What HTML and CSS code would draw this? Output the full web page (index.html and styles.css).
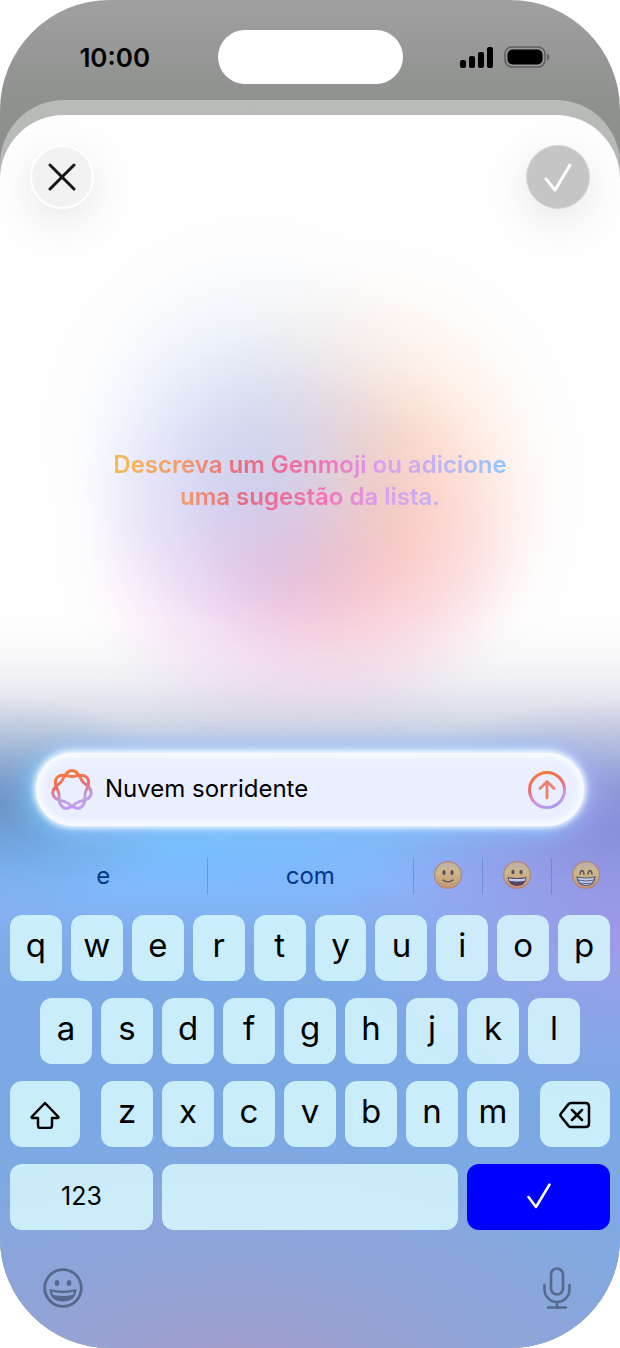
FILE: index.html
```html
<!DOCTYPE html>
<html lang="pt-BR">
<head>
  <meta charset="UTF-8" />
  <meta name="viewport" content="width=device-width, initial-scale=1.0"/>
  <title>Genmoji</title>
  <link rel="stylesheet" href="styles.css">
</head>
<body>

  <div class="phone">

    <header class="status-bar">
      <div class="time">10:00</div>
      <div class="island"></div>
      <div class="status-icons">
        <svg width="33" height="21" viewBox="0 0 33 21">
          <rect x="0" y="13" width="6" height="8" rx="2"/>
          <rect x="9" y="9" width="6" height="12" rx="2"/>
          <rect x="18" y="5" width="6" height="16" rx="2"/>
          <rect x="27" y="0" width="6" height="21" rx="2"/>
        </svg>
        <svg width="46" height="22" viewBox="0 0 46 22">
          <rect x="1" y="1" width="40" height="20" rx="7" fill="none" stroke="#5f605f" stroke-width="1.600"/>
          <rect x="3.500" y="3.500" width="35" height="15" rx="5"/>
          <path d="M43 7.500q2.500 1 2.500 3.500t-2.500 3.500z" fill="#5f605f"/>
        </svg>
      </div>
    </header>

    <div class="sheet-back">
      <main class="sheet">

        <div class="toolbar">
          <button class="round-btn" aria-label="Fechar">
            <svg width="28" height="28" viewBox="0 0 28 28"><path d="M2 2l24 24M26 2L2 26"/></svg>
          </button>
          <button class="round-btn done" aria-label="OK">
            <svg width="28" height="30" viewBox="0 0 28 30"><path d="M2 17l9 11L26 3"/></svg>
          </button>
        </div>

        <section class="canvas">
          <div class="orb"></div>
          <h1>Descreva um Genmoji ou adicione<br>uma sugestão da lista.</h1>
        </section>

        <form class="prompt" onsubmit="return false">
          <label for="description" aria-label="Descrição">
            <svg width="42" height="44" viewBox="-21 -22 42 44">
              <defs>
                <linearGradient id="knotFill" x1="0.400" y1="0" x2="0.600" y2="1">
                  <stop offset="0.100" stop-color="#f37a3c"/>
                  <stop offset="0.400" stop-color="#ee6a68"/>
                  <stop offset="0.650" stop-color="#bf9bdc"/>
                  <stop offset="1" stop-color="#c49bfa"/>
                </linearGradient>
                <mask id="knot" maskUnits="userSpaceOnUse" x="-24" y="-24" width="48" height="48">
                  <g fill="none" stroke="#fff" stroke-width="2.900">
                    <path d="M-10.600 -8.450C-7.800 -12-6.500 -19.500 0 -19.500S7.800 -12 10.600 -8.450" id="lobe"/>
                    <use href="#lobe" transform="rotate(51.430)"/>
                    <use href="#lobe" transform="rotate(102.860)"/>
                    <use href="#lobe" transform="rotate(154.290)"/>
                    <use href="#lobe" transform="rotate(205.710)"/>
                    <use href="#lobe" transform="rotate(257.140)"/>
                    <use href="#lobe" transform="rotate(308.570)"/>
                  </g>
                </mask>
              </defs>
              <rect x="-21" y="-22" width="42" height="44" fill="url(#knotFill)" mask="url(#knot)"/>
            </svg>
          </label>
          <input id="description" type="text" value="Nuvem sorridente">
          <button class="send" aria-label="Enviar">
            <svg width="38" height="38" viewBox="0 0 38 38">
              <defs>
                <linearGradient id="ringFill" x1="0.300" y1="0" x2="0.600" y2="1">
                  <stop offset="0" stop-color="#f37a3c"/>
                  <stop offset="0.400" stop-color="#ee6a68"/>
                  <stop offset="0.750" stop-color="#cf96e4"/>
                  <stop offset="1" stop-color="#b09bf0"/>
                </linearGradient>
              </defs>
              <circle cx="19" cy="19" r="17.500" fill="none" stroke="url(#ringFill)" stroke-width="3"/>
              <path d="M19 27V11M12 17.500l7-7 7 7" fill="none" stroke="#e8836f" stroke-width="2.800" stroke-linecap="round" stroke-linejoin="round"/>
            </svg>
          </button>
        </form>

        <div class="suggestions">
          <button>e</button>
          <button>com</button>
          <button aria-label="Sorriso leve">
            <svg width="28" height="28" viewBox="0 0 28 28">
              <defs>
                <linearGradient id="face" x1="0" y1="0" x2="0" y2="1">
                  <stop offset="0" stop-color="#bdb0a8"/>
                  <stop offset="0.400" stop-color="#ccb98a"/>
                  <stop offset="1" stop-color="#c2936f"/>
                </linearGradient>
              </defs>
              <circle cx="14" cy="14" r="13.400" fill="url(#face)" stroke="#b58382" stroke-width="1.200"/>
              <ellipse cx="10" cy="11.500" rx="1.700" ry="2.500" fill="#5b4f62"/>
              <ellipse cx="18" cy="11.500" rx="1.700" ry="2.500" fill="#5b4f62"/>
              <path d="M9 19q5 3.500 10 0" fill="none" stroke="#5b4f62" stroke-width="1.200" stroke-linecap="round"/>
            </svg>
          </button>
          <button aria-label="Sorriso aberto">
            <svg width="28" height="28" viewBox="0 0 28 28">
              <circle cx="14" cy="14" r="13.400" fill="url(#face)" stroke="#b58382" stroke-width="1.200"/>
              <ellipse cx="10" cy="11" rx="1.700" ry="2.300" fill="#5b4f62"/>
              <ellipse cx="18" cy="11" rx="1.700" ry="2.300" fill="#5b4f62"/>
              <path d="M4.500 16q9.500 2 19 0-1 9-9.500 9t-9.500-9z" fill="#55465f"/>
              <path d="M5.500 17.200q8.500 1.800 17 0l-.8 2.600q-7.700 1.600-15.400 0z" fill="#c5d0f5"/>
            </svg>
          </button>
          <button aria-label="Sorriso radiante">
            <svg width="28" height="28" viewBox="0 0 28 28">
              <circle cx="14" cy="14" r="13.400" fill="url(#face)" stroke="#b58382" stroke-width="1.200"/>
              <path d="M8 13q.5-3.500 2-3.500t2 3.500M16 13q.5-3.500 2-3.500t2 3.500" fill="none" stroke="#5b4f62" stroke-width="1.500" stroke-linecap="round"/>
              <path d="M5 16q9 2 18 0-1 8.500-9 8.500T5 16z" fill="#c5d0f5" stroke="#55577d" stroke-width="1.200"/>
              <path d="M5.800 19q8.200 2 16.400 0M8.500 22q5.500 1.300 11 0" fill="none" stroke="#55577d"/>
            </svg>
          </button>
        </div>

        <div class="keyboard">
          <div class="row">
            <button>q</button><button>w</button><button>e</button><button>r</button><button>t</button>
            <button>y</button><button>u</button><button>i</button><button>o</button><button>p</button>
          </div>
          <div class="row row-middle">
            <button>a</button><button>s</button><button>d</button><button>f</button><button>g</button>
            <button>h</button><button>j</button><button>k</button><button>l</button>
          </div>
          <div class="row row-shift">
            <button class="key-side" aria-label="Maiúsculas">
              <svg width="30" height="28" viewBox="0 0 30 28"><path d="M15 2L28 15.500Q29 17 27.500 17H22v7.500Q22 27 19.500 27h-9Q8 27 8 24.500V17H2.500Q1 17 2 15.500z"/></svg>
            </button>
            <div class="letters">
              <button>z</button><button>x</button><button>c</button><button>v</button>
              <button>b</button><button>n</button><button>m</button>
            </div>
            <button class="key-side" aria-label="Apagar">
              <svg width="32" height="28" viewBox="0 0 32 28"><path d="M12 2h14.500Q30 2 30 5.500v17Q30 26 26.500 26H12q-1.500 0-2.500-1.100L2 15.500Q.8 14 2 12.500L9.500 3.100Q10.500 2 12 2zM13 9l10 10M23 9L13 19"/></svg>
            </button>
          </div>
          <div class="row row-space">
            <button class="key-123">123</button>
            <button class="key-blank" aria-label="Espaço"></button>
            <button class="key-ok" aria-label="Confirmar">
              <svg width="24" height="26" viewBox="0 0 24 26"><path d="M1.500 14L9 24 22.500 1.500"/></svg>
            </button>
          </div>
        </div>

        <footer class="bottom-bar">
          <button aria-label="Emoji">
            <svg width="40" height="42" viewBox="0 0 40 42">
              <circle cx="20" cy="21" r="18.300" fill="none" stroke="#56698a" stroke-width="2.800"/>
              <ellipse cx="14" cy="16" rx="2.300" ry="2.900" fill="#56698a"/>
              <ellipse cx="26" cy="16" rx="2.300" ry="2.900" fill="#56698a"/>
              <path d="M6.500 22q13.500 3.500 27 0Q33 34.500 20 34.500T6.500 22z" fill="#56698a"/>
              <path d="M9 24.700q11 2.600 22 0l-1 3q-10 2.800-20 0z" fill="#8fa6d6"/>
            </svg>
          </button>
          <button aria-label="Ditado">
            <svg width="28" height="42" viewBox="0 0 28 42">
              <g fill="none" stroke="#56698a" stroke-width="2.600" stroke-linecap="round">
                <rect x="8" y="1.500" width="12" height="26" rx="6"/>
                <path d="M1.500 18v4.500a12.500 12.500 0 0 0 25 0V18M14 35v6M5 40.500h18"/>
              </g>
            </svg>
          </button>
        </footer>

      </main>
    </div>
  </div>

</body>
</html>
```

FILE: styles.css
```css
:root {
  --ink: #000;
  --key: rgba(218, 251, 255, 0.82);
}

* {
  box-sizing: border-box;
}

body {
  margin: 0;
  background-color: #fff;
  font-family: Inter, 'Liberation Sans', sans-serif;
  color: var(--ink);
}

button {
  display: flex;
  align-items: center;
  justify-content: center;
  margin: 0;
  padding: 0;
  border: none;
  background: none;
  font-family: inherit;
  color: inherit;
  cursor: pointer;
}

svg {
  display: block;
}

.phone {
  display: flex;
  flex-direction: column;
  min-height: 100vh;
  border-radius: 110px;
  overflow: hidden;
  background: linear-gradient(#a0a0a0, #8e918e 100px, #8b8f8b 200px);
}

/* status bar */
.status-bar {
  display: grid;
  grid-template-columns: 1fr 185px 1fr;
  align-items: center;
  padding: 30px 0 16px;
}

.time {
  padding-left: 12px;
  text-align: center;
  font-size: 26px;
  font-weight: 600;
}

.island {
  height: 54px;
  border-radius: 27px;
  background-color: #fff;
}

.status-icons {
  display: flex;
  align-items: center;
  justify-content: center;
  gap: 11px;
  padding-right: 12px;
}

/* sheets */
.sheet-back {
  display: flex;
  flex: 1;
  padding-top: 15px;
  border-radius: 64px 64px 0 0;
  background: linear-gradient(#b9bbb9, #b4b7b4 100px);
}

.sheet {
  display: flex;
  flex: 1;
  flex-direction: column;
  min-width: 0;
  border-radius: 64px 64px 0 0;
  background:
    radial-gradient(75% 20% at 38% 103%, rgba(168, 155, 200, 0.9), rgba(168, 155, 200, 0.35) 55%, rgba(168, 155, 200, 0)),
    radial-gradient(30% 9% at 0% 56%, rgba(100, 140, 190, 0.75), rgba(100, 140, 190, 0.25) 55%, rgba(100, 140, 190, 0)),
    radial-gradient(50% 7% at 30% 59%, rgba(110, 195, 255, 0.75), rgba(110, 195, 255, 0.35) 55%, rgba(110, 195, 255, 0)),
    radial-gradient(45% 11% at 104% 58%, rgba(140, 135, 212, 0.85), rgba(140, 135, 212, 0.3) 55%, rgba(140, 135, 212, 0)),
    radial-gradient(50% 14% at 104% 66%, rgba(165, 155, 235, 0.95), rgba(165, 155, 235, 0.4) 50%, rgba(165, 155, 235, 0)),
    linear-gradient(rgba(255, 255, 255, 0) 41%, #f7f7f9 44%, #eeeff4 46%, #e0e2eb 48%, #cdd5e4 50%, #b4c5e0 52%, #96b1dc 54.5%, #84b2f2 58%, #8bb5fb 62%, #7eace9 67%, #7aa9e6 72%, #7ca9e4 82%, #84a9e0 100%),
    #fefefe;
}

.toolbar {
  display: flex;
  justify-content: space-between;
  padding: 30px 30px 0;
}

.round-btn {
  width: 64px;
  height: 64px;
  border: 2px solid #fff;
  border-radius: 50%;
  background-color: #f2f2f2;
  box-shadow: 0 12px 44px rgba(0, 0, 0, 0.1);
}

.round-btn svg {
  fill: none;
  stroke: #161616;
  stroke-width: 3;
  stroke-linecap: round;
  stroke-linejoin: round;
}

.round-btn.done {
  border: 1px solid #d6d6d6;
  background-color: #c5c5c5;
}

.round-btn.done svg {
  stroke: #fff;
}

/* description area */
.canvas {
  position: relative;
  display: flex;
  flex: 1;
  align-items: center;
  justify-content: center;
}

.orb {
  position: absolute;
  inset: 30px 60px 30px;
  background:
    radial-gradient(38% 40% at 39% 40%, rgba(200, 218, 240, 0.65), rgba(200, 218, 240, 0.25) 55%, rgba(200, 218, 240, 0)),
    radial-gradient(34% 34% at 38% 51%, rgba(190, 192, 252, 0.6), rgba(190, 192, 252, 0.25) 50%, rgba(190, 192, 252, 0)),
    radial-gradient(38% 42% at 62% 47%, rgba(255, 205, 168, 0.7), rgba(255, 205, 168, 0.28) 50%, rgba(255, 205, 168, 0)),
    radial-gradient(38% 36% at 61% 60%, rgba(255, 178, 178, 0.6), rgba(255, 178, 178, 0.25) 50%, rgba(255, 178, 178, 0)),
    radial-gradient(44% 40% at 48% 65%, rgba(226, 155, 218, 0.75), rgba(226, 155, 218, 0.3) 50%, rgba(226, 155, 218, 0));
  filter: blur(16px);
}

.canvas h1 {
  position: relative;
  margin: 0;
  text-align: center;
  font-size: 24px;
  font-weight: 600;
  line-height: 32px;
  color: transparent;
  background: linear-gradient(90deg, #f8bd50, #f19a6c 18%, #ea6c7c 32%, #ee6c98 42%, #f272b4 53%, #dc9eee 68%, #c3b2f2 82%, #8fc8fa);
  background-clip: text;
  -webkit-background-clip: text;
}

/* prompt */
.prompt {
  position: relative;
  display: flex;
  align-items: center;
  gap: 12px;
  height: 73px;
  margin: 0 36px;
  padding: 0 18px 0 15px;
  border-radius: 37px;
  background-color: #e9efff;
  box-shadow:
    inset 0 0 8px 3px #fff,
    0 0 6px 1px #fff,
    0 -2px 12px rgba(225, 245, 255, 0.9),
    -8px 2px 24px rgba(110, 205, 255, 0.7),
    8px -2px 24px rgba(175, 165, 255, 0.7),
    0 0 44px rgba(160, 205, 255, 0.6);
}

.prompt input {
  flex: 1;
  min-width: 0;
  padding: 0 0 2px;
  border: none;
  outline: none;
  background: none;
  font-family: inherit;
  font-size: 24px;
  color: var(--ink);
}

/* suggestions */
.suggestions {
  display: grid;
  grid-template-columns: 1fr 1fr 69px 69px 69px;
  height: 36px;
  margin: 32px 0 21px;
}

.suggestions button {
  padding-bottom: 2px;
  font-size: 24px;
  color: #06358c;
}

.suggestions button + button {
  border-left: 1px solid rgba(70, 110, 200, 0.45);
}

/* keyboard */
.keyboard {
  display: flex;
  flex-direction: column;
  gap: 17px;
  padding: 0 10px;
}

.row,
.letters {
  display: flex;
  gap: 9px;
}

.row button {
  flex: 1;
  min-width: 0;
  height: 66px;
  padding-bottom: 6px;
  border-radius: 12px;
  background-color: var(--key);
  font-size: 33px;
}

.row svg {
  fill: none;
  stroke: var(--ink);
  stroke-width: 2.5px;
  stroke-linecap: round;
  stroke-linejoin: round;
}

.row-middle {
  padding: 0 30px;
}

.row-shift {
  gap: 21px;
}

.letters {
  flex: 1;
}

.row .key-side {
  flex: 0 0 70px;
  padding: 2px 0 0;
}

.row .key-123,
.row .key-ok {
  flex: 0 0 143px;
  padding-bottom: 2px;
  font-size: 25px;
}

.row .key-ok {
  background-color: #0000ff;
}

.row .key-ok svg {
  stroke: #fff;
}

.bottom-bar {
  display: flex;
  justify-content: space-between;
  padding: 37px 49px 39px 43px;
}
```
